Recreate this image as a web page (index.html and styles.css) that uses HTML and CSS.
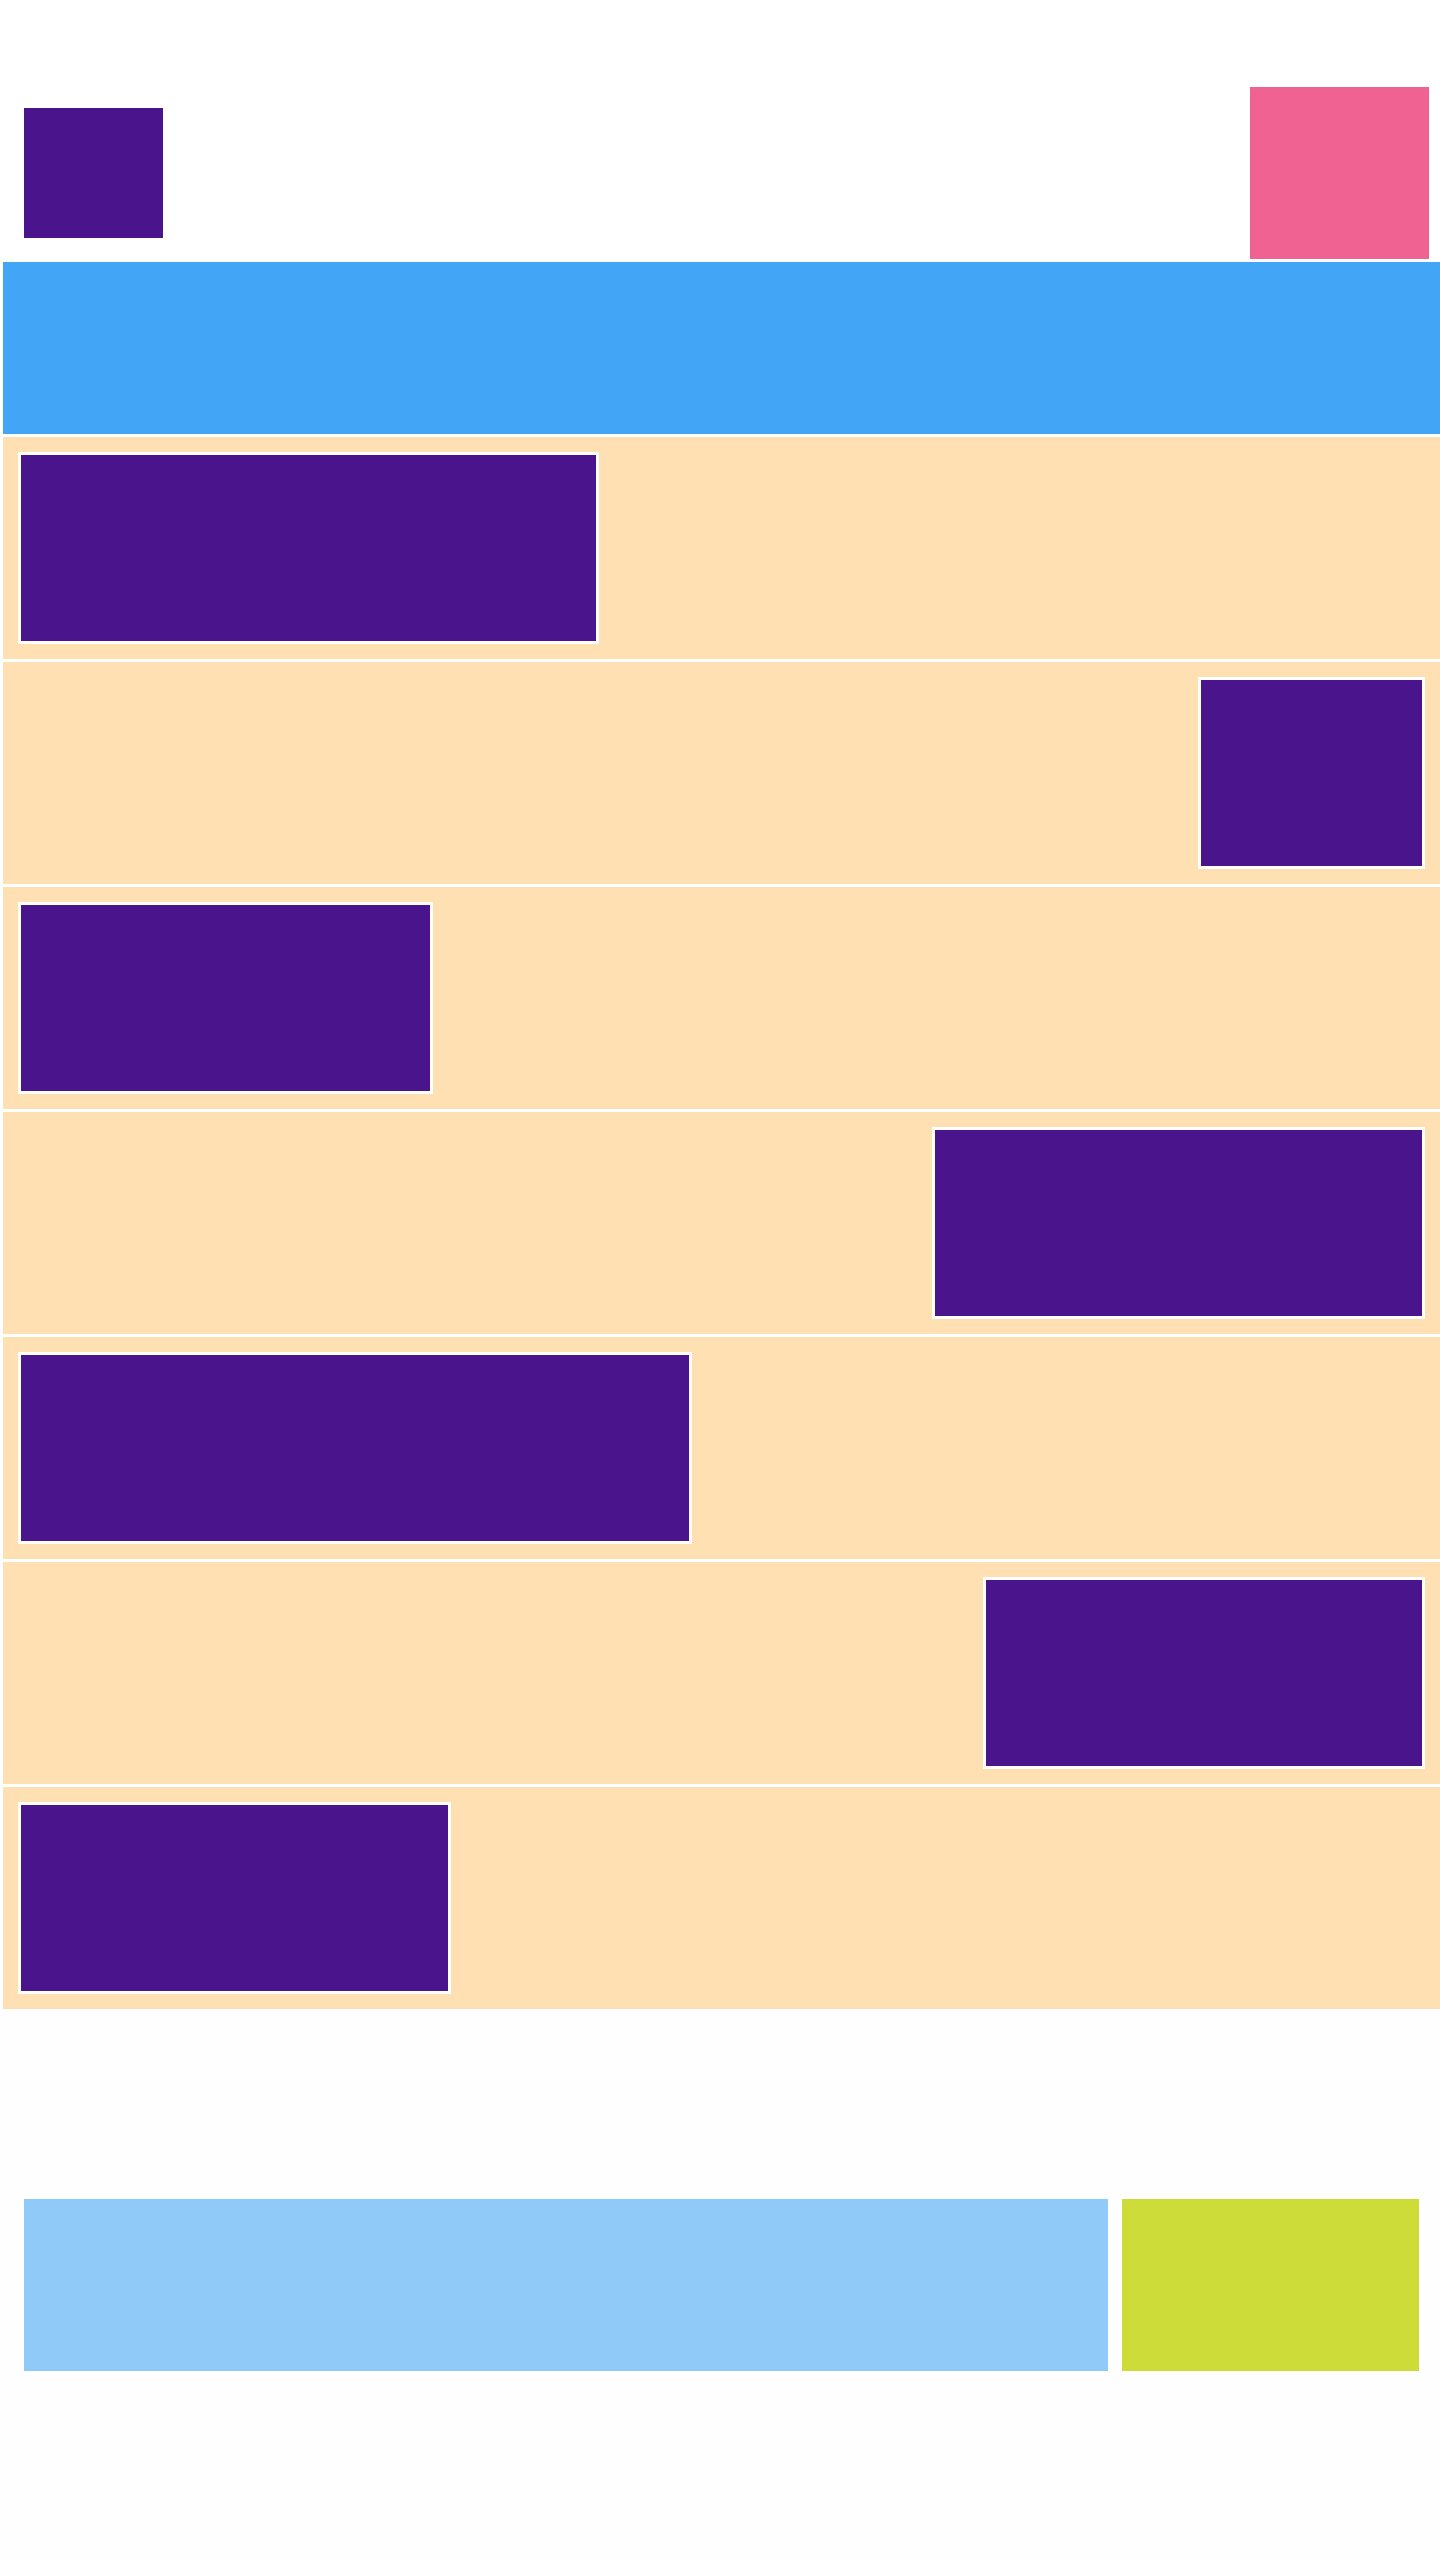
FILE: index.html
```html
<!DOCTYPE html>
<html lang="en">
<head>
  <meta charset="UTF-8" />
  <meta name="viewport" content="width=device-width, initial-scale=1.0" />
  <title>Chat</title>
  <link rel="stylesheet" href="styles.css">
</head>
<body>

  <header class="top-bar">
    <div class="logo"></div>
    <div class="avatar"></div>
  </header>

  <main class="chat">
    <div class="chat-title"></div>

    <!-- Messages alternate left / right -->
    <div class="message-row">
      <div class="bubble" style="width: 581px"></div>
    </div>
    <div class="message-row mine">
      <div class="bubble" style="width: 227px"></div>
    </div>
    <div class="message-row">
      <div class="bubble" style="width: 415px"></div>
    </div>
    <div class="message-row mine">
      <div class="bubble" style="width: 493px"></div>
    </div>
    <div class="message-row">
      <div class="bubble" style="width: 674px"></div>
    </div>
    <div class="message-row mine">
      <div class="bubble" style="width: 442px"></div>
    </div>
    <div class="message-row">
      <div class="bubble" style="width: 433px"></div>
    </div>
  </main>

  <footer class="composer">
    <div class="composer-input"></div>
    <div class="composer-send"></div>
  </footer>

</body>
</html>
```

FILE: styles.css
```css
body {
  margin: 0;
  font-family: 'Liberation Sans', Arial, sans-serif;
  background-color: #ffffff;
}

.top-bar {
  display: flex;
  justify-content: space-between;
  align-items: center;
  padding: 87px 11px 3px 24px;
}

.logo {
  width: 139px;
  height: 130px;
  background-color: #4a148c;
}

.avatar {
  width: 179px;
  height: 172px;
  background-color: #f06292;
}

.chat {
  display: flex;
  flex-direction: column;
  gap: 3px;
  margin-left: 3px;
}

.chat-title {
  height: 172px;
  background-color: #42a5f5;
}

.message-row {
  display: flex;
  justify-content: flex-start;
  padding: 15px;
  background-color: #ffe0b2;
}

.message-row.mine {
  justify-content: flex-end;
}

.bubble {
  box-sizing: border-box;
  height: 192px;
  border: 3px solid #ffffff;
  background-color: #4a148c;
}

.composer {
  display: flex;
  gap: 14px;
  padding: 190px 21px 189px 24px;
  background-color: #fefefe;
}

.composer-input {
  flex: 1;
  height: 172px;
  background-color: #90caf9;
}

.composer-send {
  width: 297px;
  height: 172px;
  background-color: #cddc39;
}
```
